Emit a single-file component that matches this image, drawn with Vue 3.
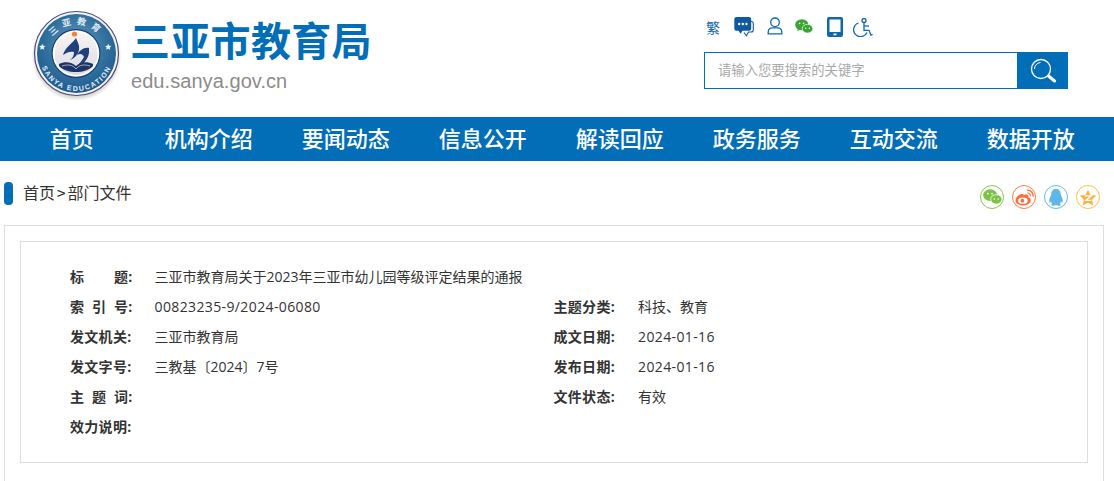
<script setup>
const navItems = ['首页', '机构介绍', '要闻动态', '信息公开', '解读回应', '政务服务', '互动交流', '数据开放']

// label parts get pushed apart by the flex row, the colon stays with the last part
const infoRows = [
  { label: ['标', '题:'], value: '三亚市教育局关于2023年三亚市幼儿园等级评定结果的通报', wide: true },
  { label: ['索', '引', '号:'], value: '00823235-9/2024-06080', num: true },
  { label: ['主题分类:'], value: '科技、教育' },
  { label: ['发文机关:'], value: '三亚市教育局' },
  { label: ['成文日期:'], value: '2024-01-16', num: true },
  { label: ['发文字号:'], value: '三教基〔2024〕7号' },
  { label: ['发布日期:'], value: '2024-01-16', num: true },
  { label: ['主', '题', '词:'], value: '' },
  { label: ['文件状态:'], value: '有效' },
  { label: ['效力说明:'], value: '' }
]
</script>

<template>
  <div class="page">
    <header class="header">
      <div class="brand">
        <svg class="logo" width="92" height="94" viewBox="0 0 92 94">
          <defs>
            <radialGradient id="ringBlue" cx="50%" cy="40%" r="60%">
              <stop offset="0%" stop-color="#6b9ac2" />
              <stop offset="60%" stop-color="#34729f" />
              <stop offset="100%" stop-color="#1d5a92" />
            </radialGradient>
            <linearGradient id="coreFill" x1="0" y1="0" x2="0" y2="1">
              <stop offset="0%" stop-color="#f8f5f3" />
              <stop offset="100%" stop-color="#dcdae1" />
            </linearGradient>
            <radialGradient id="shade" cx="50%" cy="50%" r="50%">
              <stop offset="82%" stop-color="#8d7f70" stop-opacity="0.6" />
              <stop offset="100%" stop-color="#8d7f70" stop-opacity="0" />
            </radialGradient>
            <path id="arcTop" d="M15 48 A29.500 29.500 0 0 1 74 48" />
            <path id="arcBottom" d="M7.500 48 A37 37 0 0 0 81.500 48" />
          </defs>
          <circle cx="44.500" cy="50" r="45" fill="url(#shade)" />
          <circle cx="44.500" cy="47.500" r="42" fill="#f4f4f6" stroke="#4d4a82" stroke-width="1.200" />
          <circle cx="44.500" cy="47.500" r="39.500" fill="url(#ringBlue)" />
          <circle cx="44" cy="47.500" r="24.500" fill="#12417c" />
          <circle cx="44" cy="47.500" r="23.300" fill="#fff" />
          <circle cx="44" cy="47.500" r="21.500" fill="url(#coreFill)" />
          <text class="logo-cn" fill="#dfe9f2"><textPath href="#arcTop" startOffset="50%" text-anchor="middle">三亚教育</textPath></text>
          <text class="logo-en" fill="#e6eef5"><textPath href="#arcBottom" startOffset="50%" text-anchor="middle">SANYA EDUCATION</textPath></text>
          <path d="M11 37l1.300 2.700 3 .3-2.200 2 .6 3-2.700-1.500L8.300 45l.6-3-2.200-2 3-.3z" transform="translate(2 10) scale(.75)" fill="#e9f0f6" />
          <path d="M11 37l1.300 2.700 3 .3-2.200 2 .6 3-2.700-1.500L8.300 45l.6-3-2.200-2 3-.3z" transform="translate(68 10) scale(.75)" fill="#e9f0f6" />
          <circle cx="42.500" cy="28" r="2.600" fill="#e8883a" />
          <path d="M44 32C41 37 33 41 31 49 35 46 39 45 42 46 42 49 41 52 38 54 44 52 48 46 47 40 46.500 37 45 35 44 32z" fill="#1f3f7e" />
          <path d="M57 42C52 41 47 45 45 49 48 47 51 48 52 51 50 55 47 58 43 62 50 60 56 54 57 47z" fill="#1f3f7e" />
          <path d="M27 58C33 55 40 56 44 60 48 56 55 55 61 58L61 60C57 64 51 66 44 66 37 66 31 64 27 60z" fill="#1e3467" />
          <path d="M30 60C36 58 41 59 44 63 47 59 52 58 58 60" fill="none" stroke="#d8dbe6" stroke-width=".7" />
        </svg>
        <div class="brand-text">
          <div class="brand-name">三亚市教育局</div>
          <div class="brand-url">edu.sanya.gov.cn</div>
        </div>
      </div>
      <div class="tools">
        <div class="tool-icons">
          <span class="fan">繁</span>
          <svg width="20" height="20" viewBox="0 0 20 20">
            <path d="M17 4.500c1.300 0 2.300.8 2.300 2v6.500c0 1.200-1 2-2.300 2h-2.500L12.500 18.800 10 15.500" fill="none" stroke="#0f5a9c" stroke-width="1.100" />
            <path d="M2.500 0h12.500a2.200 2.200 0 0 1 2.200 2.200v9.300a2.200 2.200 0 0 1-2.200 2.200h-6.500l-2 3-2-3H2.500A2.200 2.200 0 0 1 .3 11.500V2.200A2.200 2.200 0 0 1 2.500 0z" fill="#0f5a9c" />
            <circle cx="5.200" cy="7" r="1.200" fill="#fff" /><circle cx="8.800" cy="7" r="1.200" fill="#fff" /><circle cx="12.400" cy="7" r="1.200" fill="#fff" />
          </svg>
          <svg class="icon-person" width="16" height="18" viewBox="0 0 16 18" fill="none" stroke="#0f68ad" stroke-width="1.300">
            <circle cx="8" cy="5.300" r="4.300" />
            <path d="M1.200 16.800v-1.800c0-2.800 2.300-4.200 4.300-4.200h5c2 0 4.300 1.400 4.300 4.200v1.800z" />
          </svg>
          <svg width="18" height="15" viewBox="0 0 20 17">
            <ellipse cx="7.500" cy="6.500" rx="7.500" ry="6.300" fill="#3aa535" />
            <path d="M3 11l-.5 3 3-2z" fill="#3aa535" />
            <ellipse cx="14" cy="11" rx="6" ry="5" fill="#3aa535" stroke="#fff" stroke-width=".8" />
            <circle cx="5" cy="5" r=".9" fill="#fff" /><circle cx="9.500" cy="5" r=".9" fill="#fff" />
            <circle cx="12" cy="10.500" r=".8" fill="#fff" /><circle cx="16" cy="10.500" r=".8" fill="#fff" />
          </svg>
          <svg width="16" height="20" viewBox="0 0 16 20">
            <rect x="0" y="0" width="16" height="20" rx="2" fill="#0f68ad" />
            <rect x="2.500" y="2.500" width="11" height="12.500" fill="#fff" />
            <rect x="6.500" y="16.500" width="3" height="1.800" fill="#fff" />
          </svg>
          <svg class="icon-access" width="20" height="19" viewBox="0 0 20 19" fill="none" stroke="#0f68ad" stroke-width="1.300">
            <circle cx="11" cy="2.500" r="2" />
            <path d="M11 4.800v7.500h5l2 4.800 1.700-.6" />
            <path d="M11 8h5" />
            <path d="M5.500 5A7 7 0 1 0 14 14.500" />
          </svg>
        </div>
        <form class="search" @submit.prevent>
          <input type="text" placeholder="请输入您要搜索的关键字">
          <button type="submit" aria-label="搜索">
            <svg width="26" height="26" viewBox="0 0 26 26" fill="none" stroke="#fff">
              <circle cx="11" cy="11" r="9.500" stroke-width="1.300" />
              <path d="M4.500 11a6.500 6.500 0 0 1 6-6.500" stroke-width="1" />
              <path d="M18.500 18l6 5" stroke-width="3" stroke-linecap="round" />
            </svg>
          </button>
        </form>
      </div>
    </header>

    <nav class="nav">
      <a v-for="item in navItems" :key="item" href="#">{{ item }}</a>
    </nav>

    <div class="crumb-bar">
      <div class="crumb">
        <i class="crumb-mark"></i>
        <span>首页<span class="crumb-sep">&gt;</span>部门文件</span>
      </div>
      <div class="share">
        <a class="share-btn green" href="#">
          <svg width="19" height="16" viewBox="0 0 20 17">
            <ellipse cx="7.500" cy="6.500" rx="7.500" ry="6.300" fill="#7dc246" />
            <ellipse cx="14" cy="11" rx="6" ry="5" fill="#7dc246" stroke="#fff" stroke-width=".8" />
            <circle cx="5" cy="5" r=".9" fill="#fff" /><circle cx="9.500" cy="5" r=".9" fill="#fff" />
            <circle cx="12" cy="10.500" r=".8" fill="#fff" /><circle cx="16" cy="10.500" r=".8" fill="#fff" />
          </svg>
        </a>
        <a class="share-btn red" href="#">
          <svg width="19" height="17" viewBox="0 0 18 16">
            <path d="M8 4.500C4 4.500 .5 7.500 .5 10.500 .5 13.500 4 15.500 7.500 15.500c4.500 0 7.500-2.500 7.500-5 0-1.800-1.500-2.300-2.300-2.500.5-1.500 0-2.800-2-2.800-1 0-2 .5-2.700.8z" fill="#fb6e3f" />
            <ellipse cx="7.500" cy="11" rx="4.500" ry="3" fill="#fff" />
            <circle cx="7" cy="11" r="1.800" fill="#fb6e3f" />
            <path d="M11.500 1.200a5 5 0 0 1 5.500 6" fill="none" stroke="#fb6e3f" stroke-width="1.300" />
            <path d="M11.800 3.800a2.400 2.400 0 0 1 2.700 2.900" fill="none" stroke="#fb6e3f" stroke-width="1.100" />
          </svg>
        </a>
        <a class="share-btn blue" href="#">
          <svg width="14" height="17" viewBox="0 0 14 17">
            <path d="M7 0c3.300 0 4.800 2.700 4.800 5.500 0 .8.200 1.200.7 2 .8 1.500 1.500 3.500 1.200 5.500-.3 1-1 .5-1.700-.6-.2 1.300-.7 2-1.200 2.600.7.300 1.200.8.7 1.300-.7.700-3 .7-4.500-.2-1.500.9-3.800.9-4.500.2-.5-.5 0-1 .7-1.300-.5-.6-1-1.300-1.200-2.600-.7 1.100-1.400 1.600-1.700.6-.3-2 .4-4 1.200-5.500.5-.8.700-1.200.7-2C2.200 2.700 3.700 0 7 0z" fill="#5fb7e8" />
          </svg>
        </a>
        <a class="share-btn gold" href="#">
          <svg width="18" height="17" viewBox="0 0 16 15">
            <path d="M8 .5l2.200 4.700 5.300.6-3.900 3.500 1 5.200L8 12l-4.600 2.500 1-5.200L.5 5.800l5.300-.6z" fill="#fbb03b" />
            <path d="M5 6h6L6 10h5" fill="none" stroke="#fff" stroke-width="1.200" />
          </svg>
        </a>
      </div>
    </div>

    <section class="outer">
      <div class="inner">
        <div class="info-grid">
          <div v-for="row in infoRows" :key="row.label.join('')" class="info-row" :class="{ wide: row.wide }">
            <b class="info-label"><span v-for="part in row.label" :key="part">{{ part }}</span></b>
            <span class="info-value" :class="{ num: row.num }">{{ row.value }}</span>
          </div>
        </div>
      </div>
    </section>
  </div>
</template>

<style>
html, body {
  overflow: hidden;
  background: #fff;
}
</style>

<style scoped>
.page {
  width: 1114px;
  height: 481px;
  overflow: hidden;
  font-family: "Open Sans", "Noto Sans CJK SC", sans-serif;
  color: #333;
}

.header {
  height: 117px;
  display: flex;
  justify-content: space-between;
  padding-right: 46px;
}

.brand {
  display: flex;
  padding: 6px 0 0 32px;
}

.logo-cn {
  font-family: "Noto Sans CJK SC", sans-serif;
  font-size: 9px;
  font-weight: 700;
  letter-spacing: 5px;
}

.logo-en {
  font-family: "Liberation Sans", sans-serif;
  font-size: 7px;
  font-weight: 700;
  letter-spacing: 1.5px;
}

.brand-text {
  margin-left: 6px;
}

.brand-name {
  font-family: "Noto Sans CJK SC", sans-serif;
  font-size: 40px;
  font-weight: 700;
  line-height: 58px;
  color: #036eb8;
  margin-top: 4px;
  letter-spacing: 0.3px;
}

.brand-url {
  font-family: "Liberation Sans", sans-serif;
  font-size: 20px;
  line-height: 24px;
  color: #8c8c8c;
  margin: 1px 0 0 1px;
  letter-spacing: 0.06px;
}

.tools {
  width: 364px;
  padding-top: 16px;
}

.tool-icons {
  height: 20px;
  display: grid;
  grid-template-columns: 28px 32px 29px 32px 26px 20px;
  align-items: center;
  padding-left: 2px;
}

.icon-person {
  margin: -1px 0 0 1px;
}

.icon-access {
  margin-top: 2px;
}

.fan {
  font-family: "Noto Sans CJK SC", sans-serif;
  font-size: 14px;
  line-height: 20px;
  color: #0f68ad;
}

.search {
  display: flex;
  height: 37px;
  margin-top: 16px;
}

.search input {
  flex: 1;
  min-width: 0;
  box-sizing: border-box;
  border: 1px solid #036eb8;
  border-right: 0;
  outline: none;
  padding: 0 13px 2px;
  font-family: "Noto Sans CJK SC", sans-serif;
  font-size: 13.33px;
  color: #333;
}

.search input::placeholder {
  color: #a9a9a9;
}

.search button {
  width: 51px;
  border: 0;
  padding: 0;
  background: #036eb8;
  display: flex;
  align-items: center;
  justify-content: center;
}

.nav {
  height: 44px;
  background: #036eb8;
  display: grid;
  grid-template-columns: repeat(8, 137px);
  padding-left: 3.25px;
}

.nav a {
  font-family: "Noto Sans CJK SC", sans-serif;
  font-size: 22px;
  font-weight: 500;
  line-height: 40px;
  text-align: center;
  color: #fff;
  text-decoration: none;
}

.crumb-bar {
  height: 64px;
  display: flex;
  justify-content: space-between;
  padding: 0 14px 0 4px;
}

.crumb {
  display: flex;
  align-items: flex-start;
  padding-top: 21px;
  font-family: "Noto Sans CJK SC", sans-serif;
  font-size: 16px;
  line-height: 21px;
}

.crumb-sep {
  margin: 0 1.75px;
}

.crumb-mark {
  width: 9px;
  height: 23px;
  border-radius: 4px;
  background: #036eb8;
  margin-right: 10px;
}

.share {
  display: flex;
  gap: 8px;
  padding-top: 24px;
}

.share-btn {
  width: 24px;
  height: 24px;
  box-sizing: border-box;
  border: 1px solid;
  border-radius: 50%;
  display: flex;
  align-items: center;
  justify-content: center;
}

.green { border-color: #82c850; }
.red { border-color: #ff7a45; }
.blue { border-color: #5fbbef; }
.gold { border-color: #ffbe47; }

.outer {
  margin: 0 10px 0 4px;
  border: 1px solid #ddd;
  padding: 15px 15px 60px;
}

.inner {
  border: 1px solid #ddd;
  padding: 20px 0 20px 49px;
}

.info-grid {
  display: grid;
  grid-template-columns: 483.5px 1fr;
  grid-auto-rows: 30px;
}

.info-row {
  display: flex;
  align-items: center;
  padding-bottom: 2px;
  box-sizing: border-box;
}

.info-row.wide {
  grid-column: 1 / 3;
}

.info-label {
  width: 62.5px;
  display: flex;
  justify-content: space-between;
  font-size: 14px;
  font-weight: 700;
  letter-spacing: 0.3px;
  white-space: nowrap;
  margin-right: 22px;
}

.info-value {
  font-size: 14px;
}

.info-value.num {
  letter-spacing: 0.38px;
}
</style>
